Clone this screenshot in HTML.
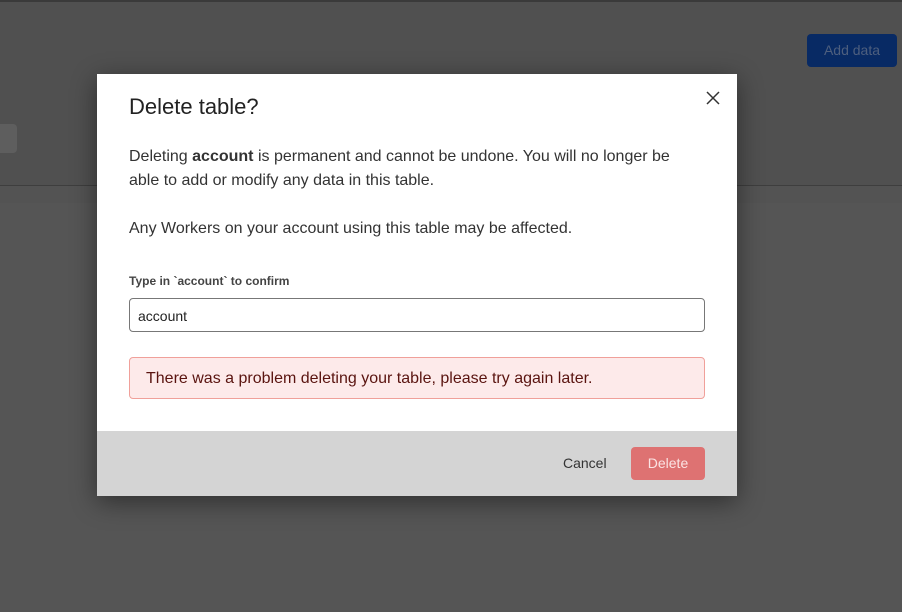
<!DOCTYPE html>
<html><head><style>
body{margin:0;width:902px;height:612px;background:#505050;position:relative;overflow:hidden;font-family:"Liberation Sans",sans-serif;}
.topline{position:absolute;left:0;top:0;width:902px;height:2px;background:#3a3a3a;}
.hline{position:absolute;left:0;top:185px;width:902px;height:1px;background:#3e3e3e;}
.lower{position:absolute;left:0;top:186px;width:902px;height:426px;background:#535353;}
.lower2{position:absolute;left:0;top:203px;width:902px;height:409px;background:#555;}
.add{position:absolute;left:807px;top:34px;width:90px;height:33px;background:#082a64;border-radius:4px;color:#4e5f7e;font-size:14px;line-height:33px;text-align:center;}
.gray{position:absolute;left:0;top:124px;width:17px;height:29px;background:#5e5e5e;border-radius:0 4px 4px 0;}
.modal{position:absolute;left:97px;top:74px;width:640px;height:422px;background:#fff;box-shadow:0 6px 24px rgba(0,0,0,.45);}
h1{position:absolute;left:32px;top:20px;margin:0;font-weight:normal;font-size:22px;color:#222;}
.x{position:absolute;left:609px;top:17px;}
.p{position:absolute;left:32px;font-size:16px;line-height:24px;color:#333;width:560px;}
.lbl{position:absolute;left:32px;top:200px;font-size:12px;font-weight:bold;color:#444;}
.inp{position:absolute;left:32px;top:224px;height:32px;border:1px solid #777;border-radius:4px;font-size:14px;line-height:34px;padding-left:8px;width:566px;color:#222;}
.err{position:absolute;left:32px;top:283px;width:576px;height:42px;box-sizing:border-box;border:1px solid #f0a09a;background:#fdeaea;border-radius:4px;color:#5a1410;font-size:16px;line-height:41px;padding-left:16px;}
.foot{position:absolute;left:0;top:357px;width:640px;height:65px;background:#d4d4d4;}
.cancel{position:absolute;left:466px;top:24px;font-size:14px;color:#333;}
.del{position:absolute;left:534px;top:16px;width:74px;height:33px;background:#de7272;border-radius:4px;color:#fbe3e3;font-size:14px;line-height:33px;text-align:center;}
</style></head><body>
<div class="topline"></div>
<div class="lower"></div><div class="lower2"></div><div class="hline"></div>
<div class="add">Add data</div>
<div class="gray"></div>
<div class="modal">
<h1>Delete table?</h1>
<svg class="x" width="14" height="14" viewBox="0 0 14 14"><path d="M1 1L13 13M13 1L1 13" stroke="#333" stroke-width="1.5"/></svg>
<div class="p" style="top:71px">Deleting <b>account</b> is permanent and cannot be undone. You will no longer be able to add or modify any data in this table.</div>
<div class="p" style="top:143px">Any Workers on your account using this table may be affected.</div>
<div class="lbl">Type in `account` to confirm</div>
<div class="inp">account</div>
<div class="err">There was a problem deleting your table, please try again later.</div>
<div class="foot"><div class="cancel">Cancel</div><div class="del">Delete</div></div>
</div>
</body></html>
